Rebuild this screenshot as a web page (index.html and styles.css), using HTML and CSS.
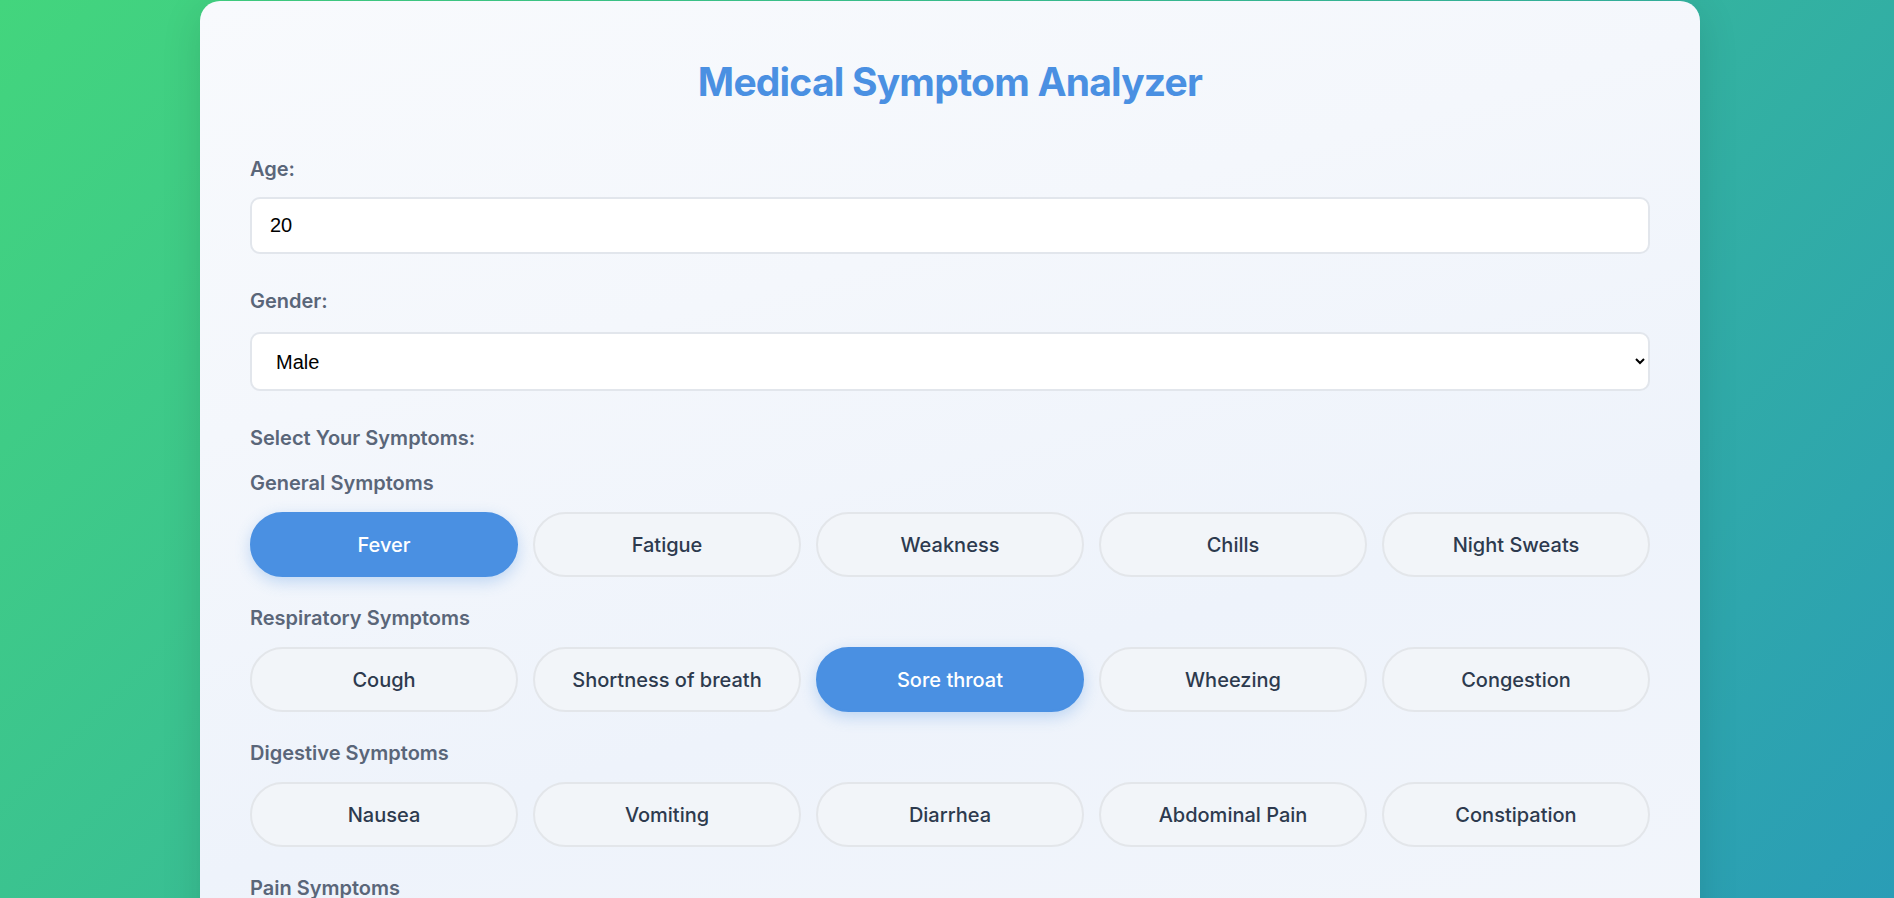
FILE: index.html
```html
<!DOCTYPE html>
<html lang="en">
<head>
<meta charset="utf-8">
<title>Medical Symptom Analyzer</title>
<link rel="stylesheet" href="styles.css">
</head>
<body>
<main class="card">
  <h1 class="title">Medical Symptom Analyzer</h1>

  <div class="form-group">
    <label class="label" for="age">Age:</label>
    <input class="field" id="age" type="number" value="20">
  </div>

  <div class="form-group">
    <label class="label label-gender" for="gender">Gender:</label>
    <select class="field field-select" id="gender">
      <option>Male</option>
      <option>Female</option>
      <option>Other</option>
    </select>
  </div>

  <div class="label label-section">Select Your Symptoms:</div>

  <section class="category">
    <h3 class="category-title">General Symptoms</h3>
    <div class="symptom-grid">
      <button class="symptom active">Fever</button>
      <button class="symptom">Fatigue</button>
      <button class="symptom">Weakness</button>
      <button class="symptom">Chills</button>
      <button class="symptom">Night Sweats</button>
    </div>
  </section>

  <section class="category">
    <h3 class="category-title">Respiratory Symptoms</h3>
    <div class="symptom-grid">
      <button class="symptom">Cough</button>
      <button class="symptom">Shortness of breath</button>
      <button class="symptom active">Sore throat</button>
      <button class="symptom">Wheezing</button>
      <button class="symptom">Congestion</button>
    </div>
  </section>

  <section class="category">
    <h3 class="category-title">Digestive Symptoms</h3>
    <div class="symptom-grid">
      <button class="symptom">Nausea</button>
      <button class="symptom">Vomiting</button>
      <button class="symptom">Diarrhea</button>
      <button class="symptom">Abdominal Pain</button>
      <button class="symptom">Constipation</button>
    </div>
  </section>

  <section class="category">
    <h3 class="category-title">Pain Symptoms</h3>
    <div class="symptom-grid">
      <button class="symptom">Headache</button>
      <button class="symptom">Chest Pain</button>
      <button class="symptom">Joint Pain</button>
      <button class="symptom">Muscle Pain</button>
      <button class="symptom">Back Pain</button>
    </div>
  </section>
</main>
</body>
</html>
```
FILE: styles.css
```css
* {
  box-sizing: border-box;
}

html {
  background: linear-gradient(135deg, #43d57d 0%, #2a9db6 100%) fixed;
  min-height: 100%;
}

body {
  margin: 0;
  padding: 1px 0 40px 6px;
  font-family: Inter, "Noto Sans", "Liberation Sans", sans-serif;
}

.card {
  width: 1500px;
  margin: 0 auto;
  padding: 57px 50px 50px;
  border-radius: 20px;
  background: linear-gradient(165deg, #f8fafd 0%, #f4f7fc 30%, #eef3fb 60%, #f3f6fb 100%);
  box-shadow: 0 10px 40px rgba(0, 0, 0, 0.12);
}

.title {
  margin: 0 0 51px;
  font-size: 39px;
  line-height: 48px;
  font-weight: 700;
  color: #4a90e2;
  text-align: center;
  letter-spacing: -0.8px;
}

.form-group {
  margin-bottom: 35px;
}

.label {
  display: block;
  margin-bottom: 16px;
  font-size: 20px;
  line-height: 24px;
  font-weight: 600;
  color: #5a6679;
}

.label-gender {
  margin-bottom: 19px;
}

.label-section {
  margin-bottom: 21px;
}

.field {
  display: block;
  width: 100%;
  padding: 15px 18px;
  border: 2px solid #e2e6ec;
  border-radius: 10px;
  background: #ffffff;
  font-family: "Liberation Sans", Arial, sans-serif;
  font-size: 20px;
  line-height: 23px;
  color: #000000;
  outline: none;
}

.field-select {
  height: 59px;
  padding: 0 14px 0 20px;
}

.category {
  margin-bottom: 29px;
}

.category-title {
  margin: 0 0 17px;
  font-size: 20px;
  line-height: 24px;
  font-weight: 600;
  color: #5a6679;
}

.symptom-grid {
  display: grid;
  grid-template-columns: repeat(5, 1fr);
  gap: 15px;
}

.symptom {
  height: 65px;
  padding: 0 10px;
  border: 2px solid #e3e6ea;
  border-radius: 40px;
  background: #f2f5f9;
  font-family: Inter, "Noto Sans", "Liberation Sans", sans-serif;
  font-size: 20px;
  font-weight: 500;
  color: #2d3a4e;
  cursor: pointer;
}

.symptom.active {
  background: #4a90e2;
  border-color: #4a90e2;
  color: #ffffff;
  box-shadow: 0 5px 15px rgba(74, 144, 226, 0.3);
}
```
